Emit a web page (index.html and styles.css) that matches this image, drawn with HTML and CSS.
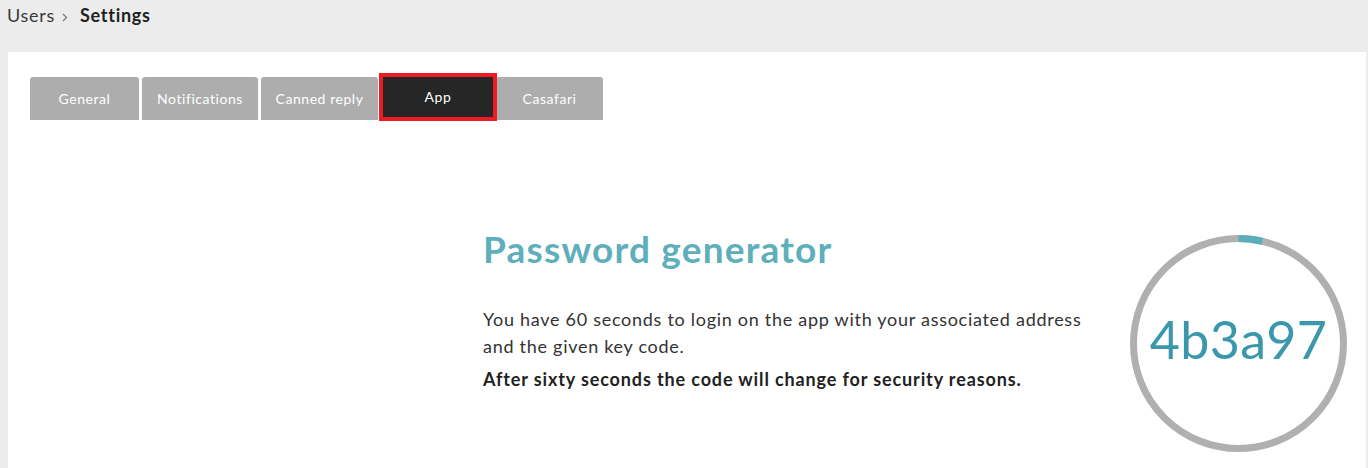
FILE: index.html
```html
<!DOCTYPE html>
<html lang="en">
<head>
<meta charset="utf-8">
<title>Settings</title>
<link rel="stylesheet" href="styles.css">
</head>
<body>
  <div class="breadcrumb">
    <span class="crumb">Users</span>
    <svg class="sep" width="6" height="9" viewBox="0 0 6 9"><path d="M1 1 L4.5 4.5 L1 8" fill="none" stroke="#777" stroke-width="1.2"/></svg>
    <span class="crumb current">Settings</span>
  </div>
  <main class="panel">
    <nav class="tabs">
      <a class="tab tab-general">General</a>
      <a class="tab tab-notif">Notifications</a>
      <a class="tab tab-canned">Canned reply</a>
      <a class="tab tab-app active">App</a>
      <a class="tab tab-casafari">Casafari</a>
    </nav>
    <section class="content">
      <div class="info">
        <h1 class="title">Password generator</h1>
        <p class="desc">You have 60 seconds to login on the app with your associated address and the given key code.</p>
        <p class="note">After sixty seconds the code will change for security reasons.</p>
      </div>
      <div class="timer">
        <svg class="ring" width="217" height="217" viewBox="0 0 217 217">
          <circle cx="108.5" cy="108.5" r="105" fill="none" stroke="#b0b0b0" stroke-width="7"/>
          <circle cx="108.5" cy="108.5" r="105" fill="none" stroke="#5aaeb9" stroke-width="7" stroke-dasharray="24 700" transform="rotate(-90 108.5 108.5)"/>
        </svg>
        <span class="code">4b3a97</span>
      </div>
    </section>
  </main>
</body>
</html>
```
FILE: styles.css
```css
html, body {
  margin: 0;
  padding: 0;
}
body {
  background: #ececec;
  font-family: Lato, "Open Sans", "Liberation Sans", sans-serif;
  color: #333;
  height: 468px;
  overflow: hidden;
  letter-spacing: 0.045em;
}
.breadcrumb {
  display: flex;
  align-items: center;
  height: 52px;
  box-sizing: border-box;
  padding: 0 8px 22px 7px;
  font-size: 18px;
  line-height: 22px;
}
.crumb {
  color: #3a3a3a;
}
.crumb.current {
  font-weight: 700;
  color: #222;
}
.sep {
  margin: 5px 12px 0 7px;
}
.panel {
  background: #fff;
  margin: 0 2px 0 8px;
  height: 416px;
  padding: 25px 0 0 22px;
  box-sizing: border-box;
}
.tabs {
  display: flex;
  align-items: flex-end;
  height: 43px;
}
.tab {
  display: flex;
  align-items: center;
  justify-content: center;
  height: 43px;
  box-sizing: border-box;
  background: #adadad;
  color: #fff;
  font-size: 14px;
  letter-spacing: 0.55px;
  padding-bottom: 1px;
  border-radius: 3px 3px 0 0;
  margin-right: 3px;
}
.tab-general { width: 109px; }
.tab-notif { width: 116px; }
.tab-canned { width: 117px; margin-right: 1px; }
.tab-app {
  width: 118px;
  height: 48px;
  margin-bottom: -1px;
  margin-right: 0;
  background: #262626;
  border: 4px solid #ed1c24;
  border-radius: 0;
  position: relative;
  z-index: 1;
}
.tab-casafari { width: 107px; margin-left: -1px; }
.content {
  display: grid;
  grid-template-columns: 647px 217px;
  margin: 107px 0 0 453px;
}
.title {
  margin: 0;
  font-size: 37px;
  line-height: 43px;
  letter-spacing: 1.2px;
  font-weight: 700;
  color: #5eafbb;
}
.desc {
  margin: 36px 0 0;
  font-size: 18px;
  line-height: 27px;
  width: 615px;
  color: #333;
}
.note {
  margin: 6px 0 0;
  font-size: 18px;
  line-height: 27px;
  letter-spacing: 0.87px;
  font-weight: 700;
  color: #222;
}
.timer {
  position: relative;
  width: 217px;
  height: 217px;
  margin-top: 8px;
  display: flex;
  align-items: center;
  justify-content: center;
}
.ring {
  position: absolute;
  inset: 0;
}
.code {
  position: relative;
  font-size: 52px;
  letter-spacing: 0.3px;
  color: #3b97ac;
  padding-bottom: 10px;
}
```
